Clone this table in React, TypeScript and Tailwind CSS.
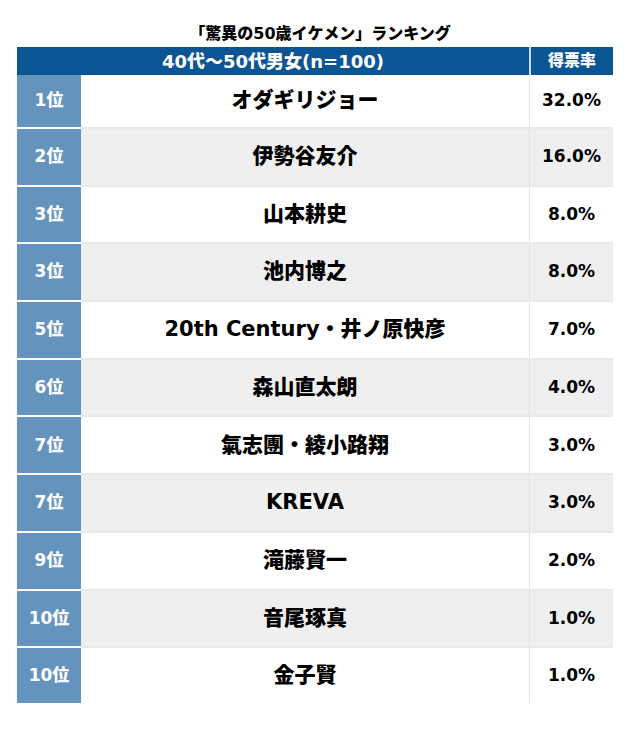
const font = '[font-family:"DejaVu_Sans","Noto_Sans_CJK_JP",sans-serif]'

const rows = [
  { rank: '1位', name: 'オダギリジョー', rate: '32.0%' },
  { rank: '2位', name: '伊勢谷友介', rate: '16.0%' },
  { rank: '3位', name: '山本耕史', rate: '8.0%' },
  { rank: '3位', name: '池内博之', rate: '8.0%' },
  { rank: '5位', name: '20th Century・井ノ原快彦', rate: '7.0%' },
  { rank: '6位', name: '森山直太朗', rate: '4.0%' },
  { rank: '7位', name: '氣志團・綾小路翔', rate: '3.0%' },
  { rank: '7位', name: 'KREVA', rate: '3.0%' },
  { rank: '9位', name: '滝藤賢一', rate: '2.0%' },
  { rank: '10位', name: '音尾琢真', rate: '1.0%' },
  { rank: '10位', name: '金子賢', rate: '1.0%' },
]

export default function App() {
  return (
    <div className={`h-[729px] w-[640px] bg-white pt-[20px] ${font}`}>
      <h1 className="text-center text-[16px] font-black leading-[27px] text-black">
        「驚異の50歳イケメン」ランキング
      </h1>
      <div className="mx-[17px] w-[596px]">
        <div className="flex h-[28px] bg-[#0c5595] text-white">
          <div className="flex w-[512px] items-center justify-center text-[18px] font-black">
            40代〜50代男女(n=100)
          </div>
          <div className="w-[2px] bg-white/80" />
          <div className="flex flex-1 items-center justify-center text-[16px] font-black">得票率</div>
        </div>
        {rows.map((r, i) => {
          const h = i === 0 ? 'h-[54px]' : i === rows.length - 1 ? 'h-[55px]' : 'h-[57.7px]'
          const last = i === rows.length - 1
          return (
            <div
              key={i}
              className={`flex ${h} ${i % 2 === 1 ? 'bg-[#efefef]' : 'bg-white'} ${last ? '' : 'border-b-2 border-[#e9e9e9]'}`}
            >
              <div
                className={`flex w-[64px] items-center justify-center bg-[#6494bd] text-[17px] font-black text-white ${last ? '' : '-mb-[2px] border-b-2 border-white'}`}
              >
                {r.rank}
              </div>
              <div className="flex w-[448px] items-center justify-center text-[21px] font-black text-black">
                {r.name}
              </div>
              <div className="w-px bg-[#e2e2e2]" />
              <div className="flex flex-1 items-center justify-center text-[17px] font-black text-black">
                {r.rate}
              </div>
            </div>
          )
        })}
      </div>
    </div>
  )
}
